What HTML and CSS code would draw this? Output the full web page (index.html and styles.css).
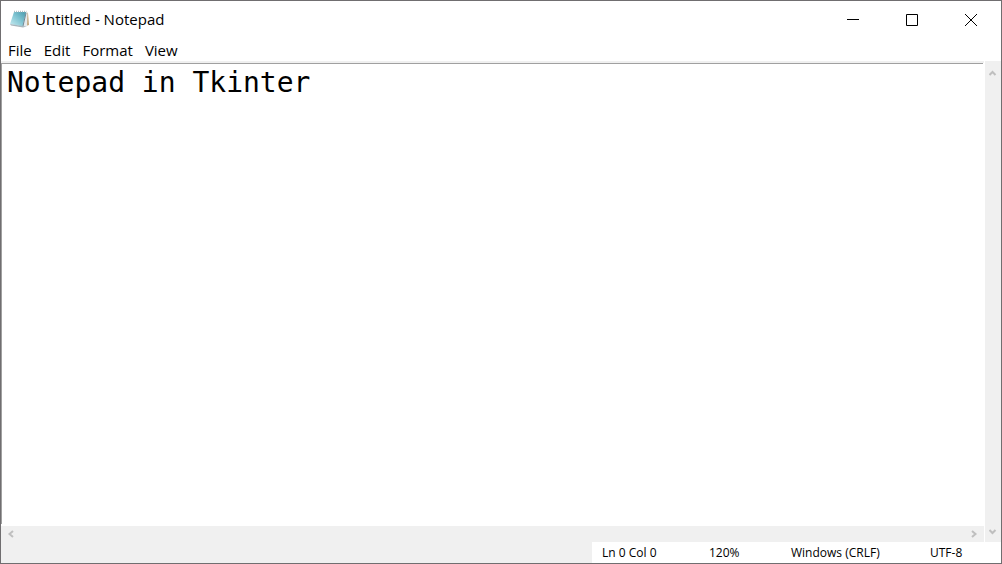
FILE: index.html
```html
<!DOCTYPE html>
<html lang="en">
<head>
<meta charset="utf-8">
<title>Untitled - Notepad</title>
<link rel="stylesheet" href="styles.css">
</head>
<body>
<div class="window">
  <header class="titlebar">
    <svg class="app-icon" width="20" height="19" viewBox="0 0 20 19" aria-hidden="true">
      <defs>
        <linearGradient id="cover" x1="1" y1="0" x2="0" y2="1">
          <stop offset="0" stop-color="#4799ac"/>
          <stop offset=".45" stop-color="#7ec3d1"/>
          <stop offset="1" stop-color="#cdeef3"/>
        </linearGradient>
      </defs>
      <path d="M17 2 19 3 20 15 17 16Z" fill="#c3a77d"/>
      <path d="M16 1.500 18.500 2.500 18 16.500 13.500 17Z" fill="#e4e9ec"/>
      <path d="M5 2 17 2 13.500 16.500 1 14Z" fill="url(#cover)"/>
      <path d="M1 14 13.500 16 17.500 16.500 14 17.500 2 15.500Z" fill="#a7b5bc"/>
      <path d="M17 3 14 16" stroke="#6f8793" fill="none"/>
      <path d="M5 1.500H17.500" stroke="#b4bfc4" stroke-width="1.500" stroke-dasharray="1 1"/>
    </svg>
    <h1 class="title">Untitled - Notepad</h1>
    <div class="controls">
      <button class="control" type="button" aria-label="Minimize">
        <svg width="12" height="12" viewBox="0 0 12 12"><path d="M0 5.500H12"/></svg>
      </button>
      <button class="control" type="button" aria-label="Maximize">
        <svg width="12" height="12" viewBox="0 0 12 12"><path d="M.5.5H11.500V11.500H.5Z"/></svg>
      </button>
      <button class="control" type="button" aria-label="Close">
        <svg width="12" height="12" viewBox="0 0 12 12"><path d="M0 0 12 12M12 0 0 12"/></svg>
      </button>
    </div>
  </header>
  <nav class="menubar">
    <button class="menu" type="button">File</button>
    <button class="menu" type="button">Edit</button>
    <button class="menu" type="button">Format</button>
    <button class="menu" type="button">View</button>
  </nav>
  <main class="workspace">
    <div class="pane">
      <textarea class="editor" aria-label="Text editor" spellcheck="false">Notepad in Tkinter</textarea>
      <div class="hscroll">
        <button class="arrow" type="button" aria-label="Scroll left"><svg width="8" height="8" viewBox="0 0 8 8"><path d="M6 1 2.500 4 6 7"/></svg></button>
        <button class="arrow" type="button" aria-label="Scroll right"><svg width="8" height="8" viewBox="0 0 8 8"><path d="M2 1 5.500 4 2 7"/></svg></button>
      </div>
    </div>
    <div class="vscroll">
      <button class="arrow" type="button" aria-label="Scroll up"><svg width="8" height="8" viewBox="0 0 8 8"><path d="M.5 6 3.500 3 6.500 6"/></svg></button>
      <button class="arrow" type="button" aria-label="Scroll down"><svg width="8" height="8" viewBox="0 0 8 8"><path d="M.5 2 3.500 5 6.500 2"/></svg></button>
    </div>
  </main>
  <footer class="statusbar">
    <div class="status">
      <span>Ln 0 Col 0</span>
      <span>120%</span>
      <span>Windows (CRLF)</span>
      <span>UTF-8</span>
    </div>
  </footer>
</div>
</body>
</html>
```
FILE: styles.css
```css
* {
  box-sizing: border-box;
}

body {
  margin: 0;
  color: #000;
  font-family: "Open Sans", "Noto Sans", sans-serif;
}

button {
  padding: 0;
  border: 0;
  background: none;
  color: inherit;
  font: inherit;
}

.window {
  display: flex;
  flex-direction: column;
  height: 100vh;
  border: 1px solid #706e70;
  background: #fff;
}

.titlebar {
  display: flex;
  align-items: center;
  height: 37px;
  padding-left: 8px;
}

.app-icon {
  margin-right: 6px;
}

.title {
  margin: 0;
  font-size: 15px;
  font-weight: 400;
  line-height: 19px;
}

.controls {
  display: flex;
  height: 100%;
  margin-left: auto;
  padding-right: 1px;
}

.control {
  display: flex;
  align-items: center;
  justify-content: center;
  width: 59px;
}

.control path {
  fill: none;
  stroke: #000;
}

.menubar {
  display: flex;
  gap: 12px;
  height: 23px;
  padding-left: 7px;
  font-size: 15px;
  line-height: 24px;
}

.workspace {
  display: flex;
  flex: 1;
  gap: 1px;
  min-height: 0;
}

.pane {
  display: flex;
  flex: 1;
  flex-direction: column;
  border-top: 2px solid #f0f0f0;
}

.editor {
  flex: 1;
  margin: 0 1px 2px 0;
  padding: 2px 5px;
  border: 0 solid #a0a0a0;
  border-width: 1px 0 0 1px;
  outline: 0;
  resize: none;
  overflow: hidden;
  color: #000;
  font: 28px/33px "DejaVu Sans Mono", monospace;
}

.hscroll,
.vscroll {
  display: flex;
  justify-content: space-between;
  background: #f0f0f0;
}

.hscroll {
  height: 16px;
  padding: 0 2px;
}

.vscroll {
  flex-direction: column;
  width: 16px;
  padding: 4px 0 2px;
}

.arrow {
  display: flex;
  align-items: center;
  justify-content: center;
  width: 16px;
  height: 16px;
}

.arrow path {
  fill: none;
  stroke: #bfbfbf;
  stroke-width: 2;
}

.statusbar {
  display: flex;
  justify-content: flex-end;
  height: 21px;
  background: #f0f0f0;
}

.status {
  display: grid;
  grid-template-columns: 107px 82px 139px 71px;
  padding-left: 10px;
  background: #fff;
  font-size: 12px;
  line-height: 21px;
}
```
